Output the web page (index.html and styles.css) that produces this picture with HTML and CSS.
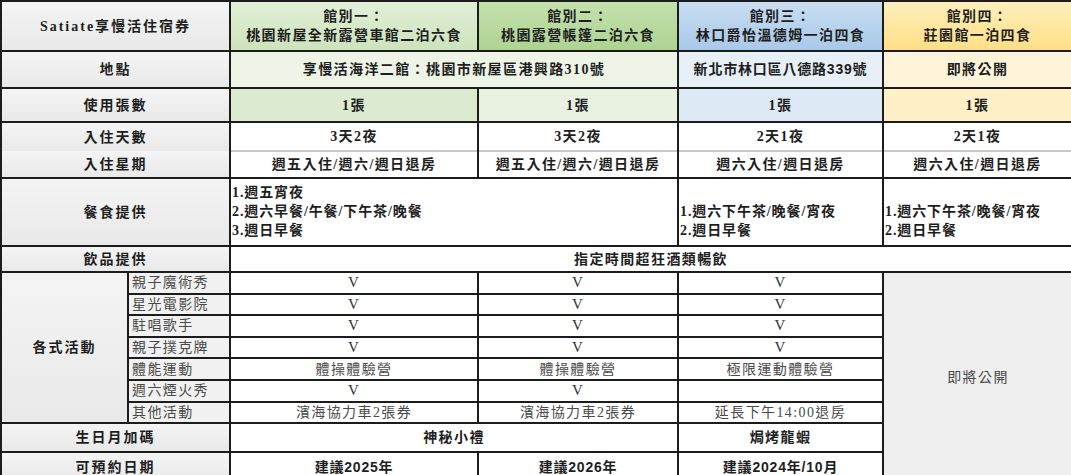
FILE: index.html
```html
<!DOCTYPE html>
<html lang="zh-Hant">
<head>
<meta charset="utf-8">
<title>Satiate享慢活住宿券</title>
<link rel="stylesheet" href="styles.css">
</head>
<body>
<table class="sheet">
  <colgroup>
    <col class="c-a"><col class="c-b"><col class="c-1"><col class="c-2"><col class="c-3"><col class="c-4">
  </colgroup>
  <tr class="r-head">
    <th colspan="2" class="lab">Satiate享慢活住宿券</th>
    <th class="h1">館別一：<br>桃園新屋全新露營車館二泊六食</th>
    <th class="h2">館別二：<br>桃園露營帳篷二泊六食</th>
    <th class="h3">館別三：<br>林口爵怡溫德姆一泊四食</th>
    <th class="h4">館別四：<br>莊園館一泊四食</th>
  </tr>
  <tr class="r-addr">
    <td colspan="2" class="lab">地點</td>
    <td colspan="2" class="g-pale">享慢活海洋二館：桃園市新屋區港興路310號</td>
    <td class="b-pale sans">新北市林口區八德路339號</td>
    <td class="y-pale">即將公開</td>
  </tr>
  <tr class="r-ticket">
    <td colspan="2" class="lab">使用張數</td>
    <td class="g-1">1張</td>
    <td class="g-2">1張</td>
    <td class="b-1">1張</td>
    <td class="y-1">1張</td>
  </tr>
  <tr class="r-days">
    <td colspan="2" class="lab no-bb">入住天數</td>
    <td class="thin-bb">3天2夜</td>
    <td class="thin-bb">3天2夜</td>
    <td class="thin-bb">2天1夜</td>
    <td class="thin-bb">2天1夜</td>
  </tr>
  <tr class="r-week">
    <td colspan="2" class="lab no-bt">入住星期</td>
    <td class="no-bt">週五入住/週六/週日退房</td>
    <td class="no-bt">週五入住/週六/週日退房</td>
    <td class="no-bt">週六入住/週日退房</td>
    <td class="no-bt">週六入住/週日退房</td>
  </tr>
  <tr class="r-meal">
    <td colspan="2" class="lab mid">餐食提供</td>
    <td colspan="2" class="left">1.週五宵夜<br>2.週六早餐/午餐/下午茶/晚餐<br>3.週日早餐</td>
    <td class="left">1.週六下午茶/晚餐/宵夜<br>2.週日早餐</td>
    <td class="left">1.週六下午茶/晚餐/宵夜<br>2.週日早餐</td>
  </tr>
  <tr class="r-drink">
    <td colspan="2" class="lab">飲品提供</td>
    <td colspan="4">指定時間超狂酒類暢飲</td>
  </tr>
  <tr class="r-act">
    <td rowspan="7" class="lab mid">各式活動</td>
    <td class="sub">親子魔術秀</td>
    <td class="act v">V</td>
    <td class="act v">V</td>
    <td class="act v">V</td>
    <td rowspan="9" class="soon">即將公開</td>
  </tr>
  <tr class="r-act">
    <td class="sub">星光電影院</td>
    <td class="act v">V</td>
    <td class="act v">V</td>
    <td class="act v">V</td>
  </tr>
  <tr class="r-act">
    <td class="sub">駐唱歌手</td>
    <td class="act v">V</td>
    <td class="act v">V</td>
    <td class="act v">V</td>
  </tr>
  <tr class="r-act">
    <td class="sub">親子撲克牌</td>
    <td class="act v">V</td>
    <td class="act v">V</td>
    <td class="act v">V</td>
  </tr>
  <tr class="r-act">
    <td class="sub">體能運動</td>
    <td class="act">體操體驗營</td>
    <td class="act">體操體驗營</td>
    <td class="act">極限運動體驗營</td>
  </tr>
  <tr class="r-act">
    <td class="sub">週六煙火秀</td>
    <td class="act v">V</td>
    <td class="act v">V</td>
    <td class="act"></td>
  </tr>
  <tr class="r-act">
    <td class="sub">其他活動</td>
    <td class="act">濱海協力車2張券</td>
    <td class="act">濱海協力車2張券</td>
    <td class="act">延長下午14:00退房</td>
  </tr>
  <tr class="r-bday">
    <td colspan="2" class="lab">生日月加碼</td>
    <td colspan="2">神秘小禮</td>
    <td>焗烤龍蝦</td>
  </tr>
  <tr class="r-date">
    <td colspan="2" class="lab">可預約日期</td>
    <td class="sans">建議2025年</td>
    <td class="sans">建議2026年</td>
    <td class="sans">建議2024年/10月</td>
  </tr>
</table>
</body>
</html>
```

FILE: styles.css
```css
html, body {
  margin: 0;
  padding: 0;
  background: #ffffff;
}

.sheet {
  border-collapse: collapse;
  table-layout: fixed;
  width: 1071px;
  font-family: "Liberation Serif", "Noto Sans CJK TC", serif;
  font-size: 14px;
  font-weight: 700;
  color: #1e1e1e;
  letter-spacing: 1.4px;
}

.c-a { width: 127px; }
.c-b { width: 102px; }
.c-1 { width: 248px; }
.c-2 { width: 200px; }
.c-3 { width: 205px; }
.c-4 { width: 189px; }

.sheet th,
.sheet td {
  border: 2px solid #1c1c1c;
  padding: 0 2px;
  text-align: center;
  vertical-align: middle;
  line-height: 19px;
  white-space: nowrap;
  overflow: hidden;
}

.sheet th { font-weight: 700; }

.r-head { height: 50px; }
.r-addr { height: 37px; }
.r-ticket { height: 34px; }
.r-days { height: 29px; }
.r-week { height: 27px; }
.r-meal { height: 68px; }
.r-drink { height: 26px; }
.r-act { height: 21.6px; }
.r-act td { line-height: 17px; }
.r-bday { height: 29px; }
.r-date { height: 30px; }

.lab {
  background: linear-gradient(#f4f4f4, #e9e9e9);
  letter-spacing: 2px;
}

.h1 { background: linear-gradient(#e3efd8, #cde3bb); }
.h2 { background: linear-gradient(#c4e1ad, #add391); }
.h3 { background: linear-gradient(#c9def2, #a9c8e8); }
.h4 { background: linear-gradient(#ffefbd, #ffdf85); }

.g-pale { background: #eef5e7; }
.b-pale { background: #e7eff8; }
.y-pale { background: #fff4da; }

.g-1 { background: #dcebd0; }
.g-2 { background: #e9f2e1; }
.b-1 { background: #dde9f5; }
.y-1 { background: #fff0c8; }

.sans { font-family: "Liberation Sans", "Noto Sans CJK TC", sans-serif; letter-spacing: 0.8px; }

.no-bb { border-bottom-width: 0 !important; }
.no-bt { border-top-color: #c8c8c8 !important; }
.lab.no-bt { border-top-width: 0 !important; }
.thin-bb { border-bottom: 1px solid #c8c8c8 !important; }

.r-meal td { vertical-align: bottom; padding-bottom: 5px; }
.r-meal td.mid { vertical-align: middle; padding-bottom: 0; }
.sheet td.left { text-align: left; padding-left: 1px; letter-spacing: 0.9px; }

.sub {
  background: #f1f1f1;
  text-align: left !important;
  padding-left: 3px !important;
  font-weight: 400;
  color: #4a4a4a;
}

.act {
  font-weight: 400;
  color: #4a4a4a;
}

.v {
  font-size: 15px;
  color: #333333;
}

.soon {
  background: #efefef;
  font-weight: 400;
  color: #4a4a4a;
  border-right-width: 0 !important;
}
```
